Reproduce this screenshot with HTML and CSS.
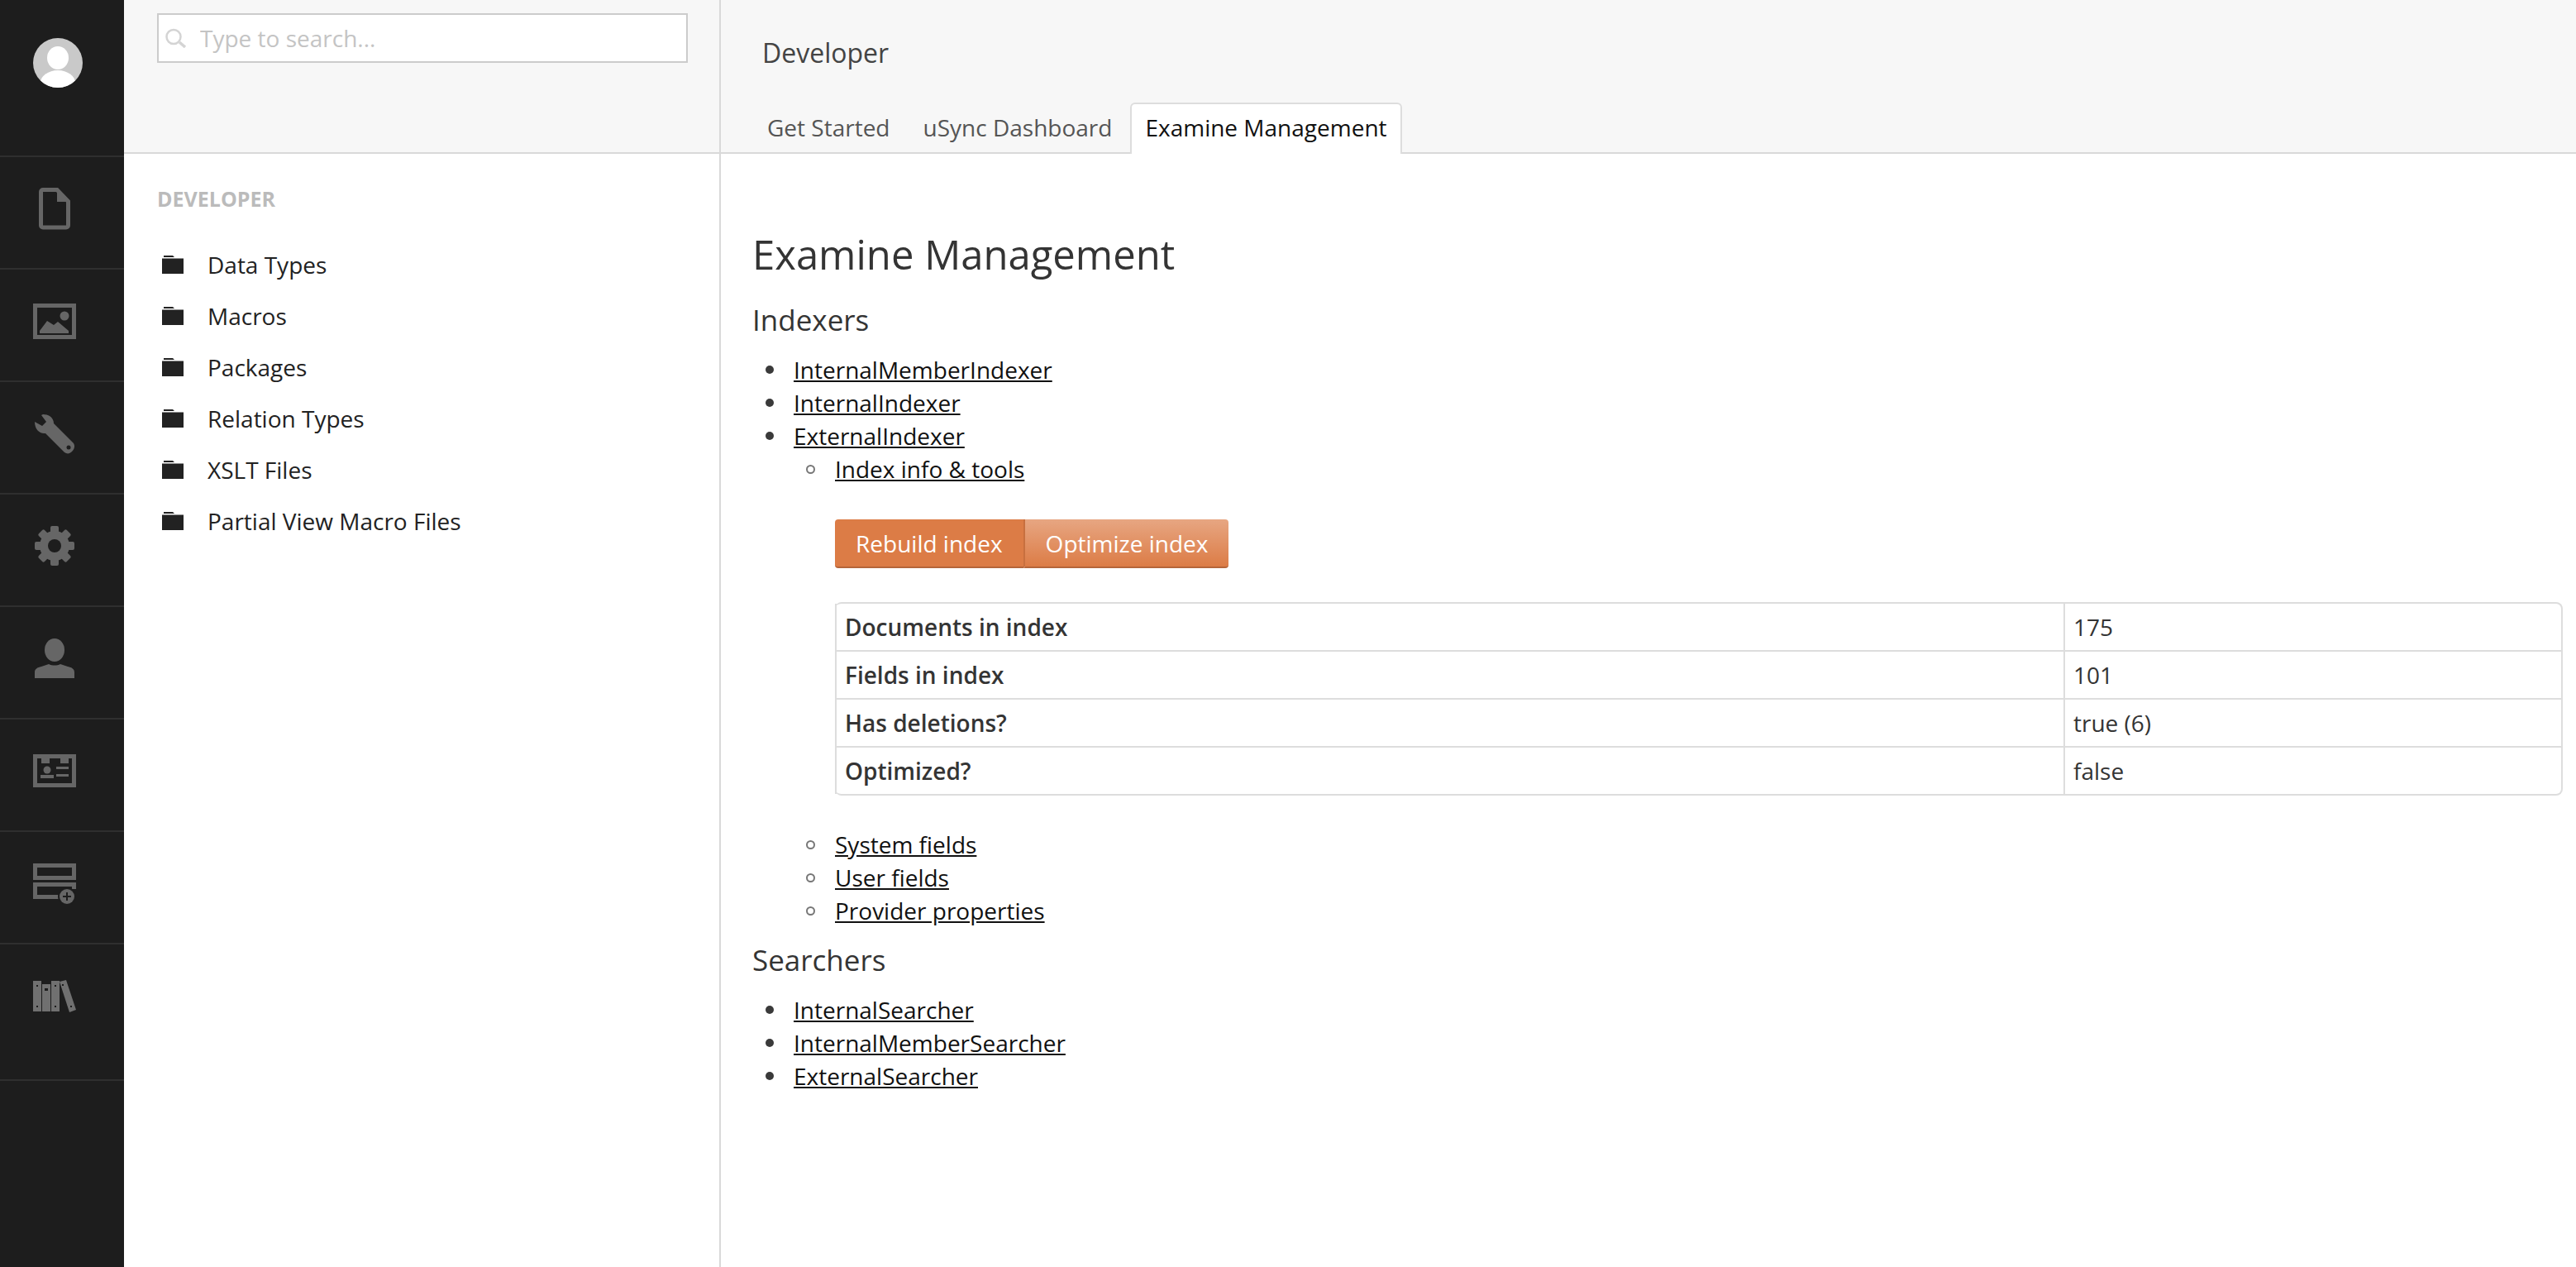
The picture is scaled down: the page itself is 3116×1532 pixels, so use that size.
FILE: index.html
```html
<!DOCTYPE html>
<html lang="en">
<head>
    <meta charset="UTF-8">
    <title>Examine Management</title>
    <link rel="stylesheet" href="styles.css">
</head>
<body>
    <div class="app">
        <nav class="sections">
            <div class="avatar-row">
                <svg class="avatar" viewBox="0 0 60 60" width="60" height="60">
                    <defs><clipPath id="avatarClip"><circle cx="30" cy="30" r="30"/></clipPath></defs>
                    <circle cx="30" cy="30" r="30" fill="#c9c9c9"/>
                    <g clip-path="url(#avatarClip)" fill="#fff">
                        <ellipse cx="30" cy="24" rx="13" ry="14"/>
                        <ellipse cx="30" cy="54" rx="21" ry="15"/>
                    </g>
                </svg>
            </div>
            <a class="section">
                <svg viewBox="0 0 52 52" width="52" height="52">
                    <path d="M12 3.5h17l13.5 14v29a2.5 2.5 0 0 1-2.5 2.500H12a2.500 2.500 0 0 1-2.500-2.500V6a2.500 2.500 0 0 1 2.500-2.500z" fill="none" stroke="#666" stroke-width="5"/>
                    <path d="M29 4l14 14H29z" fill="#666"/>
                </svg>
            </a>
            <a class="section">
                <svg viewBox="0 0 52 52" width="52" height="52" fill="#666">
                    <rect x="2.500" y="7.500" width="47" height="38" fill="none" stroke="#666" stroke-width="5"/>
                    <circle cx="38" cy="20" r="5.500"/>
                    <path d="M8 38l9-12 8 5 5-4 13 11v3H8z"/>
                </svg>
            </a>
            <a class="section">
                <svg viewBox="0 0 52 52" width="52" height="52">
                    <path d="M10 4l2-1c7 0 13 4 13 11l24 24c2 3 1 7-2 10s-6 3-9 1L15 26C8 27 2 21 2 12l9 5 5-5z" fill="#666"/>
                    <circle cx="43" cy="43" r="2.500" fill="#1d1d1d"/>
                </svg>
            </a>
            <a class="section">
                <svg viewBox="0 0 52 52" width="52" height="52" fill="#666">
                    <rect x="21" y="2" width="10" height="48" rx="2"/>
                    <rect x="21" y="2" width="10" height="48" rx="2" transform="rotate(45 26 26)"/>
                    <rect x="21" y="2" width="10" height="48" rx="2" transform="rotate(90 26 26)"/>
                    <rect x="21" y="2" width="10" height="48" rx="2" transform="rotate(135 26 26)"/>
                    <circle cx="26" cy="26" r="13" fill="none" stroke="#666" stroke-width="10"/>
                    <circle cx="26" cy="26" r="8" fill="#1d1d1d"/>
                </svg>
            </a>
            <a class="section">
                <svg viewBox="0 0 52 52" width="52" height="52" fill="#666">
                    <ellipse cx="26" cy="16" rx="12" ry="14"/>
                    <path d="M2 50v-7c0-4 3-6 8-7l9-3c4 2 10 2 14 0l9 3c5 1 8 3 8 7v7z"/>
                </svg>
            </a>
            <a class="section">
                <svg viewBox="0 0 52 52" width="52" height="52" fill="#666">
                    <rect x="2.500" y="8.500" width="47" height="35" fill="none" stroke="#666" stroke-width="5"/>
                    <rect x="10" y="8" width="10" height="9"/>
                    <rect x="33" y="8" width="10" height="9"/>
                    <circle cx="17" cy="25" r="4.500"/>
                    <rect x="9" y="31" width="16" height="4"/>
                    <rect x="28" y="21" width="15" height="3"/>
                    <rect x="28" y="30" width="15" height="3"/>
                </svg>
            </a>
            <a class="section">
                <svg viewBox="0 0 52 52" width="52" height="52">
                    <rect x="2.500" y="4.500" width="47" height="15" fill="none" stroke="#666" stroke-width="5"/>
                    <path d="M2.500 27.500h47M2.500 25v17.500H36M49.500 25v8" fill="none" stroke="#666" stroke-width="5"/>
                    <circle cx="41" cy="42" r="11" fill="#1d1d1d"/>
                    <circle cx="41" cy="42" r="9" fill="#666"/>
                    <path d="M41 37v10M36 42h10" stroke="#1d1d1d" stroke-width="2"/>
                </svg>
            </a>
            <a class="section section-last">
                <svg viewBox="0 0 52 52" width="52" height="52" fill="#707070">
                    <rect x="0" y="8" width="10" height="37"/>
                    <rect x="11" y="12" width="10" height="33"/>
                    <rect x="22" y="8" width="10" height="37"/>
                    <path d="M32 9l8-2 12 36-8 3z"/>
                    <g fill="#1d1d1d">
                        <rect x="4" y="13" width="2" height="2"/>
                        <rect x="4" y="38" width="2" height="2"/>
                        <rect x="14" y="17" width="4" height="3"/>
                        <rect x="26" y="13" width="2" height="2"/>
                        <rect x="26" y="38" width="2" height="2"/>
                        <rect x="35" y="12" width="2" height="2"/>
                        <rect x="45" y="38" width="2" height="2"/>
                    </g>
                </svg>
            </a>
        </nav>

        <aside class="tree-col">
            <div class="tree-head">
                <div class="search">
                    <svg viewBox="0 0 27 24" width="27" height="24">
                        <circle cx="11" cy="10.500" r="8.500" fill="none" stroke="#d4d4d4" stroke-width="2.500"/>
                        <path d="M18 17l7 6" stroke="#d4d4d4" stroke-width="3.500"/>
                    </svg>
                    <input type="text" placeholder="Type to search...">
                </div>
            </div>
            <h5 class="tree-title">DEVELOPER</h5>
            <ul class="tree">
                <li><svg class="folder" viewBox="0 0 26 22" width="26" height="22"><path d="M2 0h11l2 2H2zM0 3.500h26V22H0z"/></svg>Data Types</li>
                <li><svg class="folder" viewBox="0 0 26 22" width="26" height="22"><path d="M2 0h11l2 2H2zM0 3.500h26V22H0z"/></svg>Macros</li>
                <li><svg class="folder" viewBox="0 0 26 22" width="26" height="22"><path d="M2 0h11l2 2H2zM0 3.500h26V22H0z"/></svg>Packages</li>
                <li><svg class="folder" viewBox="0 0 26 22" width="26" height="22"><path d="M2 0h11l2 2H2zM0 3.500h26V22H0z"/></svg>Relation Types</li>
                <li><svg class="folder" viewBox="0 0 26 22" width="26" height="22"><path d="M2 0h11l2 2H2zM0 3.500h26V22H0z"/></svg>XSLT Files</li>
                <li><svg class="folder" viewBox="0 0 26 22" width="26" height="22"><path d="M2 0h11l2 2H2zM0 3.500h26V22H0z"/></svg>Partial View Macro Files</li>
            </ul>
        </aside>

        <main class="main">
            <header class="main-head">
                <div class="page-name">Developer</div>
                <ul class="tabs">
                    <li>Get Started</li>
                    <li>uSync Dashboard</li>
                    <li class="active">Examine Management</li>
                </ul>
            </header>
            <div class="content">
                <h3>Examine Management</h3>
                <h4>Indexers</h4>
                <ul class="list">
                    <li><a href="#">InternalMemberIndexer</a></li>
                    <li><a href="#">InternalIndexer</a></li>
                    <li><a href="#">ExternalIndexer</a>
                        <ul class="sublist">
                            <li><a href="#">Index info &amp; tools</a>
                                <div class="tools">
                                    <div class="btn-group">
                                        <button class="btn">Rebuild index</button>
                                        <button class="btn btn-light">Optimize index</button>
                                    </div>
                                    <table class="info">
                                        <tr><th>Documents in index</th><td>175</td></tr>
                                        <tr><th>Fields in index</th><td>101</td></tr>
                                        <tr><th>Has deletions?</th><td>true (6)</td></tr>
                                        <tr><th>Optimized?</th><td>false</td></tr>
                                    </table>
                                </div>
                            </li>
                            <li><a href="#">System fields</a></li>
                            <li><a href="#">User fields</a></li>
                            <li><a href="#">Provider properties</a></li>
                        </ul>
                    </li>
                </ul>
                <h4>Searchers</h4>
                <ul class="list">
                    <li><a href="#">InternalSearcher</a></li>
                    <li><a href="#">InternalMemberSearcher</a></li>
                    <li><a href="#">ExternalSearcher</a></li>
                </ul>
            </div>
        </main>
    </div>
</body>
</html>
```

FILE: styles.css
```css
html, body {
    height: 100%;
    margin: 0;
}
body {
    font-family: "Open Sans", sans-serif;
    font-size: 28px;
    line-height: 40px;
    color: #343434;
    background: #fff;
    overflow: hidden;
}
.app {
    display: flex;
    height: 100%;
}

/* left black bar */
.sections {
    width: 150px;
    flex: none;
    background: #1d1d1d;
}
.avatar-row {
    height: 190px;
    box-sizing: border-box;
    padding: 46px 0 0 40px;
    border-bottom: 2px solid #2f2f2f;
}
.avatar {
    display: block;
}
.section {
    display: block;
    height: 136px;
    box-sizing: border-box;
    padding: 36px 0 0 40px;
    border-bottom: 2px solid #2f2f2f;
}
.section svg {
    display: block;
}
.section-last {
    height: 165px;
}

/* tree column */
.tree-col {
    width: 722px;
    flex: none;
    box-sizing: border-box;
    border-right: 2px solid #d9d9d9;
}
.tree-head {
    height: 186px;
    box-sizing: border-box;
    padding: 16px 38px 0 40px;
    background: #f7f7f7;
    border-bottom: 2px solid #d9d9d9;
}
.search {
    display: flex;
    align-items: center;
    height: 60px;
    box-sizing: border-box;
    padding-left: 7px;
    border: 2px solid #ccc;
    background: #fff;
}
.search input {
    flex: 1;
    min-width: 0;
    border: 0;
    outline: 0;
    padding: 0;
    margin-left: 16px;
    font: inherit;
}
.search input::placeholder {
    color: #c4c4c4;
}
.tree-title {
    margin: 34px 0 0 40px;
    font-size: 25px;
    line-height: 40px;
    font-weight: 700;
    color: #bbb;
}
.tree {
    list-style: none;
    margin: 29px 0 0;
    padding: 0 0 0 46px;
    color: #222;
}
.tree li {
    display: flex;
    align-items: center;
    height: 62px;
}
.folder {
    fill: #222;
    margin-right: 29px;
    flex: none;
}

/* main area */
.main {
    flex: 1;
    min-width: 0;
}
.main-head {
    height: 186px;
    box-sizing: border-box;
    background: #f7f7f7;
    border-bottom: 2px solid #d9d9d9;
    display: flex;
    flex-direction: column;
}
.page-name {
    padding: 44px 0 0 50px;
    font-size: 32px;
    color: #444;
}
.tabs {
    list-style: none;
    display: flex;
    margin: auto 0 -2px;
    padding: 0 0 0 38px;
}
.tabs li {
    padding: 8px 16px 12px;
    margin-right: 4px;
    border: 2px solid transparent;
    border-bottom: 0;
    color: #555;
}
.tabs .active {
    background: #fff;
    border-color: #ddd;
    border-radius: 6px 6px 0 0;
    color: #111;
}
.content {
    padding: 81px 17px 0 38px;
}
h3 {
    margin: 0 0 20px;
    font-size: 49px;
    line-height: 80px;
    font-weight: 400;
}
h4 {
    margin: 20px 0;
    font-size: 35px;
    line-height: 40px;
    font-weight: 400;
}
.list, .sublist {
    list-style: none;
    margin: 0;
    padding: 0 0 0 50px;
}
.list > li::before {
    content: "";
    display: inline-block;
    width: 10px;
    height: 10px;
    margin: 0 24px 0 -34px;
    border-radius: 50%;
    background: #3a3a3a;
    vertical-align: 6px;
}
.sublist > li::before {
    content: "";
    display: inline-block;
    box-sizing: border-box;
    width: 11px;
    height: 11px;
    margin: 0 24px 0 -35px;
    border: 2px solid #777;
    border-radius: 50%;
    vertical-align: 5px;
}
a {
    color: #111;
}
.tools {
    padding: 41px 0 39px;
}
.btn-group {
    display: flex;
    margin-bottom: 41px;
}
.btn {
    height: 59px;
    padding: 0 25px;
    border: 0;
    border-bottom: 2px solid #b5653a;
    border-radius: 4px 0 0 4px;
    background: #dc7c46;
    color: #fff;
    font: inherit;
}
.btn-light {
    border-left: 2px solid #c8703f;
    border-radius: 0 4px 4px 0;
    background: linear-gradient(#e7a682, #dc7c46);
}
.info {
    width: 2090px;
    table-layout: fixed;
    border-collapse: separate;
    border-spacing: 0;
    border: 2px solid #ddd;
    border-left: 0;
    border-radius: 8px;
}
.info th, .info td {
    padding: 8px 10px;
    text-align: left;
    border-left: 2px solid #ddd;
    border-top: 2px solid #ddd;
}
.info tr:first-child th, .info tr:first-child td {
    border-top: 0;
}
.info th {
    width: 1464px;
    font-weight: 600;
}
```
